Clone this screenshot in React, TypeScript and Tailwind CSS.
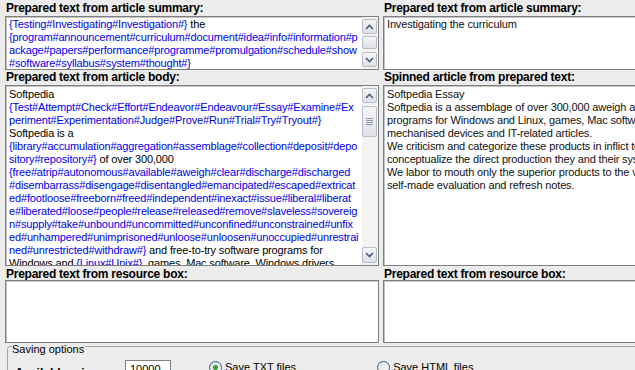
import React from "react";

type Seg = [string, boolean?];
type Line = Seg[];

const summaryLines: Line[] = [
  [["{Testing#Investigating#Investigation#}", true], [" the"]],
  [["{program#announcement#curriculum#document#idea#info#information#p", true]],
  [["ackage#papers#performance#programme#promulgation#schedule#show", true]],
  [["#software#syllabus#system#thought#}", true]],
];

const bodyLines: Line[] = [
  [["Softpedia"]],
  [["{Test#Attempt#Check#Effort#Endeavor#Endeavour#Essay#Examine#Ex", true]],
  [["periment#Experimentation#Judge#Prove#Run#Trial#Try#Tryout#}", true]],
  [["Softpedia is a"]],
  [["{library#accumulation#aggregation#assemblage#collection#deposit#depo", true]],
  [["sitory#repository#}", true], [" of over 300,000"]],
  [["{free#atrip#autonomous#available#aweigh#clear#discharge#discharged", true]],
  [["#disembarrass#disengage#disentangled#emancipated#escaped#extricat", true]],
  [["ed#footloose#freeborn#freed#independent#inexact#issue#liberal#liberat", true]],
  [["e#liberated#loose#people#release#released#remove#slaveless#sovereig", true]],
  [["n#supply#take#unbound#uncommitted#unconfined#unconstrained#unfix", true]],
  [["ed#unhampered#unimprisoned#unloose#unloosen#unoccupied#unrestrai", true]],
  [["ned#unrestricted#withdraw#}", true], [" and free-to-try software programs for"]],
  [["Windows and "], ["{Linux#Unix#}", true], [", games, Mac software, Windows drivers"]],
];

const spunLines: string[] = [
  "Softpedia Essay",
  "Softpedia is a assemblage of over 300,000 aweigh and free-to-try software",
  "programs for Windows and Linux, games, Mac software, Windows drivers,",
  "mechanised devices and IT-related articles.",
  "We criticism and categorize these products in inflict to allow the visitor/user to",
  "conceptualize the direct production they and their system needs.",
  "We labor to mouth only the superior products to the visitor/user together with",
  "self-made evaluation and refresh notes.",
];

function Lines({ lines }: { lines: Line[] }) {
  return (
    <>
      {lines.map((line, i) => (
        <div key={i} className="whitespace-pre leading-[13px] h-[13px] tracking-[-0.15px]">
          {line.map(([t, blue], j) => (
            <span key={j} className={blue ? "text-[#0000ee]" : "text-black"}>
              {t}
            </span>
          ))}
        </div>
      ))}
    </>
  );
}

function Chevron({ up }: { up?: boolean }) {
  return (
    <svg width="9" height="6" viewBox="0 0 9 6">
      <path
        d={up ? "M1 5 L4.5 1.5 L8 5" : "M1 1 L4.5 4.5 L8 1"}
        stroke="#4d5d7c"
        strokeWidth="1.6"
        fill="none"
      />
    </svg>
  );
}

function SBtn({ up, h }: { up?: boolean; h: string }) {
  return (
    <div
      className={`${h} w-[15px] rounded-[2px] border border-[#b9bec8] bg-gradient-to-b from-[#f4f5f8] to-[#dde0e6] flex items-center justify-center`}
    >
      <Chevron up={up} />
    </div>
  );
}

function ScrollSmall() {
  return (
    <div className="w-[16px] h-full bg-[#f3f3f1] flex flex-col items-start">
      <div className="mt-[2px]">
        <SBtn up h="h-[15px]" />
      </div>
      <div className="mt-[2px] h-[13px] w-[15px] rounded-[2px] border border-[#b9bec8] bg-gradient-to-b from-[#f4f5f8] to-[#dde0e6]" />
      <div className="flex-1" />
      <div className="mb-[2px]">
        <SBtn h="h-[15px]" />
      </div>
    </div>
  );
}

function ScrollBig() {
  return (
    <div className="w-[16px] h-full bg-[#f3f3f1] flex flex-col items-start">
      <div className="mt-[2px]">
        <SBtn up h="h-[15px]" />
      </div>
      <div className="mt-[3px] h-[31px] w-[15px] rounded-[2px] border border-[#b9bec8] bg-gradient-to-b from-[#f4f5f8] to-[#dde0e6] flex flex-col items-center justify-center gap-[1px]">
        <div className="w-[7px] h-px bg-[#8f98aa]" />
        <div className="w-[7px] h-px bg-[#8f98aa]" />
        <div className="w-[7px] h-px bg-[#8f98aa]" />
        <div className="w-[7px] h-px bg-[#8f98aa]" />
      </div>
      <div className="flex-1" />
      <div className="mb-[2px]">
        <SBtn h="h-[16px]" />
      </div>
    </div>
  );
}

function Label({ children, h, pt = "pt-[1px]" }: { children: React.ReactNode; h: string; pt?: string }) {
  return (
    <div className={`${h} shrink-0 pl-[1px]`}>
      <div className={`font-bold text-[12px] leading-[14px] tracking-[-0.25px] text-black whitespace-nowrap ${pt}`}>
        {children}
      </div>
    </div>
  );
}

const boxCls = "bg-white border border-[#7f7f7f] shadow-[inset_1px_1px_0_#c4c4c4] overflow-hidden shrink-0";

export default function App() {
  return (
    <div className="w-[635px] h-[370px] overflow-hidden bg-[#ececec] font-['Liberation_Sans',Arial,sans-serif] text-[11px] text-black">
      <div className="flex h-[344px]">
        {/* Left column */}
        <div className="w-[380px] shrink-0 pl-[5px] pr-[1px] flex flex-col">
          <Label h="h-[16px]">Prepared text from article summary:</Label>
          <div className={`${boxCls} h-[54px] flex`}>
            <div className="flex-1 pl-[3px] pt-[1px] overflow-hidden">
              <Lines lines={summaryLines} />
            </div>
            <ScrollSmall />
          </div>
          <Label h="h-[15px]" pt="pt-[0px]">Prepared text from article body:</Label>
          <div className={`${boxCls} h-[181px] flex`}>
            <div className="flex-1 pl-[3px] pt-[2px] overflow-hidden">
              <Lines lines={bodyLines} />
            </div>
            <ScrollBig />
          </div>
          <Label h="h-[14px]">Prepared text from resource box:</Label>
          <div className={`${boxCls} h-[63px]`} />
        </div>

        {/* Right column */}
        <div className="flex-1 min-w-0 pl-[3px] flex flex-col overflow-hidden">
          <Label h="h-[16px]">Prepared text from article summary:</Label>
          <div className={`${boxCls} w-[270px] h-[54px] pl-[3px] pt-[1px]`}>
            <div className="whitespace-pre leading-[13px] tracking-[-0.15px] text-[#111]">Investigating the curriculum</div>
          </div>
          <Label h="h-[15px]" pt="pt-[0px]">Spinned article from prepared text:</Label>
          <div className={`${boxCls} w-[270px] h-[181px] pl-[3px] pt-[2px]`}>
            {spunLines.map((l, i) => (
              <div key={i} className="whitespace-pre leading-[13px] h-[13px] tracking-[-0.15px] text-[#111]">
                {l}
              </div>
            ))}
          </div>
          <Label h="h-[14px]">Prepared text from resource box:</Label>
          <div className={`${boxCls} w-[270px] h-[63px]`} />
        </div>
      </div>

      {/* Saving options group */}
      <div className="pl-[7px] pt-[2px]">
        <div className="relative w-[640px] h-[40px] border border-[#a5a5a5] rounded-[3px]">
          <span className="absolute -top-[4px] left-[4px] bg-[#ececec] pr-[1px] leading-[13px] text-[11px] text-black">
            Saving options
          </span>
          <div className="flex items-start">
            <div className="w-[110px] shrink-0 ml-[7px] mt-[18px] font-bold text-[12px] leading-[16px] text-black whitespace-nowrap overflow-hidden">
              Available min:
            </div>
            <div className="mt-[13px] w-[46px] h-[20px] shrink-0 bg-white border border-[#7f7f7f] pl-[4px] leading-[16px] text-[11px]">
              10000
            </div>
            <div className="ml-[38px] mt-[14px] flex items-center gap-[3px]">
              <div className="w-[13px] h-[13px] rounded-full border border-[#2c5a8c] bg-gradient-to-br from-[#dcdcd6] to-white flex items-center justify-center">
                <div className="w-[5px] h-[5px] rounded-full bg-[#2ea52e]" />
              </div>
              <span className="leading-[13px] whitespace-nowrap">Save TXT files</span>
            </div>
            <div className="ml-[81px] mt-[14px] flex items-center gap-[3px]">
              <div className="w-[13px] h-[13px] rounded-full border border-[#2c5a8c] bg-gradient-to-br from-[#dcdcd6] to-white" />
              <span className="leading-[13px] whitespace-nowrap">Save HTML files</span>
            </div>
          </div>
        </div>
      </div>
    </div>
  );
}
